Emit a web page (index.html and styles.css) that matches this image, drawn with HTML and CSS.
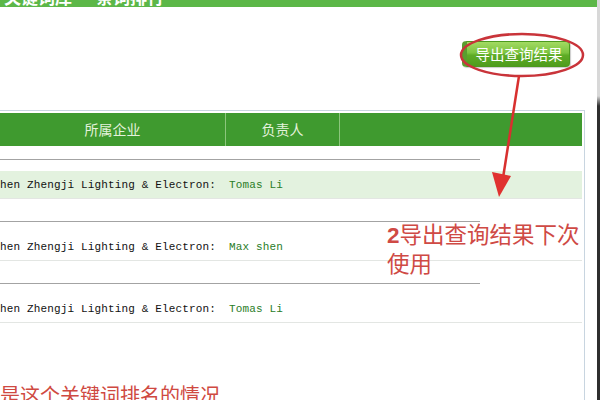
FILE: index.html
```html
<!DOCTYPE html>
<html lang="zh-CN">
<head>
<meta charset="utf-8">
<link rel="stylesheet" href="styles.css">
</head>
<body>
<div class="screen">
  <div class="main">
    <div class="topbar">
      <span class="tab">关键词库</span>
      <span class="tab tab2">条词排行</span>
    </div>
    <div class="toolbar">
      <button class="export-btn">导出查询结果</button>
    </div>
    <div class="table-box">
      <div class="thead">
        <div class="th th-company">所属企业</div>
        <div class="th th-owner">负责人</div>
        <div class="th th-rest"></div>
      </div>
      <div class="records">
        <div class="record">
          <div class="sep"></div>
          <div class="row hl"><span class="company">hen Zhengji Lighting &amp; Electron:</span><span class="owner">Tomas Li</span></div>
        </div>
        <div class="record">
          <div class="sep"></div>
          <div class="row"><span class="company">hen Zhengji Lighting &amp; Electron:</span><span class="owner">Max shen</span></div>
        </div>
        <div class="record">
          <div class="sep"></div>
          <div class="row"><span class="company">hen Zhengji Lighting &amp; Electron:</span><span class="owner">Tomas Li</span></div>
        </div>
      </div>
      <p class="note-bottom">是这个关键词排名的情况</p>
    </div>
  </div>
  <div class="edge"></div>

  <svg class="marks" width="600" height="400" viewBox="0 0 600 400" xmlns="http://www.w3.org/2000/svg">
    <ellipse cx="522" cy="55" rx="61" ry="21" fill="none" stroke="#c9343a" stroke-width="2.5"/>
    <line x1="519" y1="76" x2="503" y2="178" stroke="#d8302f" stroke-width="2.5"/>
    <polygon points="499,197 492,172 511,176" fill="#e0312f"/>
  </svg>
  <div class="note-right"><b>2</b>导出查询结果下次<br>使用</div>
</div>
</body>
</html>
```

FILE: styles.css
```css
html, body {
  margin: 0;
  padding: 0;
  background: #ffffff;
}

.screen {
  position: relative;
  width: 600px;
  height: 400px;
  overflow: hidden;
  display: flex;
  font-family: "Noto Sans CJK SC", "Noto Sans", sans-serif;
}

.main {
  width: 597px;
  display: flex;
  flex-direction: column;
}

.main > * {
  flex-shrink: 0;
}

.edge {
  width: 3px;
  background: linear-gradient(#d8d8d8 0, #d8d8d8 96px, #2f2f2f 106px, #2f2f2f 100%);
}

.topbar {
  height: 7px;
  background: #5cb748;
  overflow: hidden;
  display: flex;
  gap: 24px;
  padding-left: 4px;
}

.tab {
  color: #ffffff;
  font-size: 17px;
  font-weight: bold;
  line-height: 17px;
  margin-top: -12px;
}

.toolbar {
  display: flex;
  justify-content: flex-end;
  padding: 34px 27px 0 0;
  height: 69px;
  box-sizing: border-box;
}

.export-btn {
  height: 26px;
  width: 108px;
  padding: 0 0 0 2px;
  border: 1px solid #4c9a1e;
  border-left: 5px solid #5a9e2f;
  border-radius: 4px;
  background: linear-gradient(#a2da62 0%, #7cc440 45%, #5eac26 55%, #4f9c1d 100%);
  color: #ffffff;
  font-family: "Noto Sans CJK SC", sans-serif;
  font-size: 14.5px;
  line-height: 24px;
  box-shadow: 1px 1px 1px rgba(0, 0, 0, 0.2);
}

.table-box {
  margin-top: 34px;
  width: 585px;
  box-sizing: border-box;
  border-top: 1px solid #c8d5e0;
  border-right: 1px solid #c8d5e0;
  padding: 2px 2px 0 0;
  flex-grow: 1;
}

.thead {
  height: 33px;
  background: #3f9a2f;
  display: grid;
  grid-template-columns: 225px 115px 1fr;
}

.th {
  color: #e4f2dc;
  font-size: 14px;
  line-height: 33px;
  text-align: center;
}

.th-owner {
  border-left: 1px solid #8cc67c;
  border-right: 1px solid #8cc67c;
}

.records {
  padding-top: 13px;
}

.record + .record {
  margin-top: 22px;
}

.sep {
  width: 480px;
  height: 1px;
  background: #a3a3a3;
  margin-bottom: 11px;
}

.row {
  height: 27px;
  border-bottom: 1px solid #e3e6e3;
  display: flex;
  align-items: center;
  font-family: "Liberation Mono", "DejaVu Sans Mono", monospace;
  font-size: 11px;
  letter-spacing: 0.15px;
}

.row.hl {
  background: #e3f2df;
}

.company {
  width: 229px;
  color: #111111;
}

.owner {
  color: #2a7d28;
}

.note-bottom {
  margin: 60px 0 0 0;
  color: #cf4941;
  font-size: 20px;
  line-height: 24px;
  white-space: nowrap;
}

.marks {
  position: absolute;
  left: 0;
  top: 0;
  pointer-events: none;
}

.note-right {
  position: absolute;
  left: 387px;
  top: 220px;
  color: #cf4a45;
  font-size: 22.5px;
  line-height: 27px;
  white-space: nowrap;
}

.note-right b {
  font-family: "Liberation Sans", Arial, sans-serif;
  font-weight: bold;
}
```
